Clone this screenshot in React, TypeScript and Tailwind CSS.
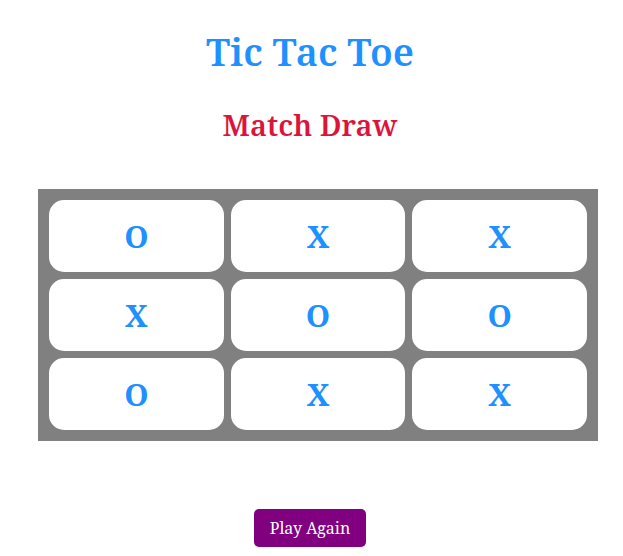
import React from "react";

const cells = ["O", "X", "X", "X", "O", "O", "O", "X", "X"];

export default function App() {
  return (
    <div
      className="w-[623px] min-h-[556px] bg-white"
      style={{ fontFamily: '"Noto Serif", "DejaVu Serif", serif' }}
    >
      <div className="w-[620px] flex flex-col">
        <h1 className="text-center text-[38px] font-semibold text-[#1e90ff] leading-none mt-[32px]">
          Tic Tac Toe
        </h1>
        <h2 className="text-center text-[29px] font-semibold text-[#dc143c] leading-none mt-[40px]">
          Match Draw
        </h2>
        <div className="ml-[38px] mt-[50px] w-[560px] bg-[#808080] p-[11px] grid grid-cols-3 gap-[7px]">
          {cells.map((c, i) => (
            <div
              key={i}
              className="h-[72px] bg-white rounded-[15px] flex items-center justify-center text-[31px] font-bold text-[#1e90ff]"
            >
              {c}
            </div>
          ))}
        </div>
        <div className="flex justify-center mt-[68px]">
          <button className="w-[112px] h-[38px] bg-[#800080] text-white rounded-[5px] text-[16px]">
            Play Again
          </button>
        </div>
      </div>
    </div>
  );
}
